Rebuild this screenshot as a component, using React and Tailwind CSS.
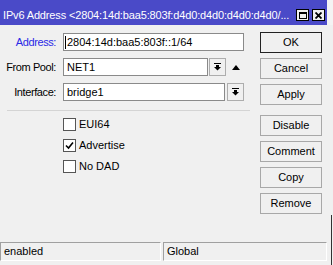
import React from 'react';

const font = { fontFamily: '"Liberation Sans", Arial, sans-serif' };

const DropIcon = () => (
    <svg width="7" height="8" viewBox="0 0 7 8" className="block">
        <rect x="0" y="0" width="7" height="1" fill="#000" />
        <rect x="2" y="2" width="3" height="2" fill="#000" />
        <polygon points="0,4 7,4 3.5,7.5" fill="#000" />
    </svg>
);

const DropButton = () => (
    <div className="w-[17px] h-[18px] border border-[#adadad] bg-[#f0f0f0] flex items-center justify-center">
        <DropIcon />
    </div>
);

const Button = ({ label, primary }) => (
    <div
        className={`h-[21px] w-[62px] flex items-center justify-center text-[11px] text-black bg-[#f0f0f0] border ${primary ? 'border-[#222]' : 'border-[#a8a8a8]'}`}
    >
        {label}
    </div>
);

const Check = ({ label, checked }) => (
    <div className="flex items-center h-[13px]">
        <div className="w-[13px] h-[13px] border border-[#555] bg-white flex items-center justify-center">
            {checked && (
                <svg width="9" height="9" viewBox="0 0 9 9">
                    <polyline points="1,4.5 3.5,7 8,1.5" fill="none" stroke="#000" strokeWidth="1.6" />
                </svg>
            )}
        </div>
        <span className="ml-[3px] text-[11px] text-black">{label}</span>
    </div>
);

const StatusField = ({ text, className }) => (
    <div className={`h-[19px] flex items-center pl-[3px] text-[11px] text-black border border-t-[#a0a0a0] border-l-[#a0a0a0] border-b-white border-r-white ${className}`}>
        {text}
    </div>
);

export default function App() {
    return (
        <div className="relative w-[333px] h-[265px] bg-[#f0f0f0] flex flex-col overflow-hidden" style={font}>
            {/* Title bar */}
            <div className="flex h-[25px]">
                <div className="w-[327px] h-full bg-[#4a4ac8] flex items-center pt-[5px] pl-[3px] pr-[2px]">
                    <span className="flex-1 text-[11px] tracking-[-0.15px] text-white whitespace-nowrap">
                        IPv6 Address &lt;2804:14d:baa5:803f:d4d0:d4d0:d4d0:d4d0/...
                    </span>
                    <div className="w-[13px] h-[12px] bg-[#f0f0f0] border border-black flex items-center justify-center ml-[3px]">
                        <div className="w-[8px] h-[7px] border border-black border-t-2" />
                    </div>
                    <div className="w-[13px] h-[12px] bg-[#f0f0f0] border border-black flex items-center justify-center ml-[3px]">
                        <svg width="7" height="7" viewBox="0 0 7 7">
                            <path d="M0.5 0.5 L6.5 6.5 M6.5 0.5 L0.5 6.5" stroke="#000" strokeWidth="1.8" />
                        </svg>
                    </div>
                </div>
                <div className="flex-1 bg-[#f4f4f4]" />
            </div>

            {/* Body */}
            <div className="flex-1 flex">
                <div className="w-[260px] flex flex-col pt-[8px]">
                    <div className="flex flex-col gap-[7px]">
                        <div className="flex items-center h-[18px]">
                            <span className="w-[56px] text-right text-[11px] tracking-[-0.4px] text-[#2a2ae6]">Address:</span>
                            <div className="ml-[7px] w-[181px] h-[18px] bg-white border border-[#8a8a8a] flex items-center pl-[1px] text-[11px] text-black whitespace-nowrap">
                                <span className="w-px h-[13px] bg-black mr-px" />
                                2804:14d:baa5:803f::1/64
                            </div>
                        </div>
                        <div className="flex items-center h-[18px]">
                            <span className="w-[56px] text-right text-[11px] tracking-[-0.4px] text-black">From Pool:</span>
                            <div className="ml-[7px] w-[145px] h-[18px] bg-white border border-[#8a8a8a] flex items-center pl-[3px] text-[11px] text-black">
                                NET1
                            </div>
                            <div className="ml-[1px]">
                                <DropButton />
                            </div>
                            <svg width="8" height="5" viewBox="0 0 8 5" className="ml-[6px]">
                                <polygon points="0,5 8,5 4,0" fill="#000" />
                            </svg>
                        </div>
                        <div className="flex items-center h-[18px]">
                            <span className="w-[56px] text-right text-[11px] tracking-[-0.4px] text-black">Interface:</span>
                            <div className="ml-[7px] w-[162px] h-[18px] bg-white border border-[#8a8a8a] flex items-center pl-[3px] text-[11px] text-black">
                                bridge1
                            </div>
                            <div className="ml-[2px]">
                                <DropButton />
                            </div>
                        </div>
                    </div>

                    <div className="mt-[9px] ml-[7px] w-[243px] h-px bg-[#d4d4d4]" />

                    <div className="mt-[7px] ml-[63px] flex flex-col gap-[8px]">
                        <Check label="EUI64" />
                        <Check label="Advertise" checked />
                        <Check label="No DAD" />
                    </div>
                </div>

                <div className="flex flex-col pt-[7px]">
                    <div className="flex flex-col gap-[5px]">
                        <Button label="OK" primary />
                        <Button label="Cancel" />
                        <Button label="Apply" />
                    </div>
                    <div className="mt-[10px] flex flex-col gap-[5px]">
                        <Button label="Disable" />
                        <Button label="Comment" />
                        <Button label="Copy" />
                        <Button label="Remove" />
                    </div>
                </div>
            </div>

            {/* Status bar */}
            <div className="flex h-[23px] pb-[4px]">
                <StatusField text="enabled" className="w-[161px]" />
                <StatusField text="Global" className="ml-[2px] w-[164px]" />
            </div>

            <div className="absolute right-[1px] top-[215px] w-px h-[50px] bg-[#333]" />
        </div>
    );
}
